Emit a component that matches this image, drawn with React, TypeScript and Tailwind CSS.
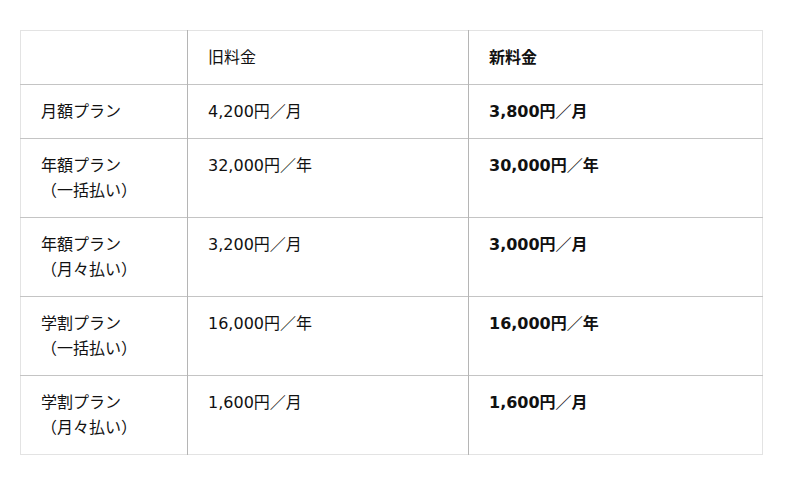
const ROWS = [
  { plan: ["月額プラン"], old: "4,200円／月", next: "3,800円／月" },
  { plan: ["年額プラン", "（一括払い）"], old: "32,000円／年", next: "30,000円／年" },
  { plan: ["年額プラン", "（月々払い）"], old: "3,200円／月", next: "3,000円／月" },
  { plan: ["学割プラン", "（一括払い）"], old: "16,000円／年", next: "16,000円／年" },
  { plan: ["学割プラン", "（月々払い）"], old: "1,600円／月", next: "1,600円／月" },
];

export default function App() {
  return (
    <div
      className="w-[800px] h-[485px] bg-white text-[16px] leading-[25px] text-[#111]"
      style={{ fontFamily: '"DejaVu Sans", "Noto Sans CJK JP", sans-serif' }}
    >
      <div className="pt-[30px] pl-[20px]">
        <table className="w-[742px] border-collapse border border-[#e3e3e3] table-fixed">
          <colgroup>
            <col className="w-[167px]" />
            <col className="w-[281px]" />
            <col className="w-[294px]" />
          </colgroup>
          <thead>
            <tr className="border-b border-[#c4c4c4]">
              <th className="border-r border-[#b5b5b5] px-[20px] pt-[14px] pb-[14px] text-left font-normal align-top"></th>
              <th className="border-r border-[#b5b5b5] px-[20px] pt-[14px] pb-[14px] text-left font-normal align-top">
                旧料金
              </th>
              <th className="px-[20px] pt-[14px] pb-[14px] text-left font-bold align-top">新料金</th>
            </tr>
          </thead>
          <tbody>
            {ROWS.map((r, i) => (
              <tr key={i} className={i < ROWS.length - 1 ? "border-b border-[#c4c4c4]" : ""}>
                <td className="border-r border-[#b5b5b5] px-[20px] pt-[14px] pb-[14px] align-top">
                  {r.plan.map((p) => (
                    <div key={p}>{p}</div>
                  ))}
                </td>
                <td className="border-r border-[#b5b5b5] px-[20px] pt-[14px] pb-[14px] align-top">{r.old}</td>
                <td className="px-[20px] pt-[14px] pb-[14px] align-top font-bold">{r.next}</td>
              </tr>
            ))}
          </tbody>
        </table>
      </div>
    </div>
  );
}
